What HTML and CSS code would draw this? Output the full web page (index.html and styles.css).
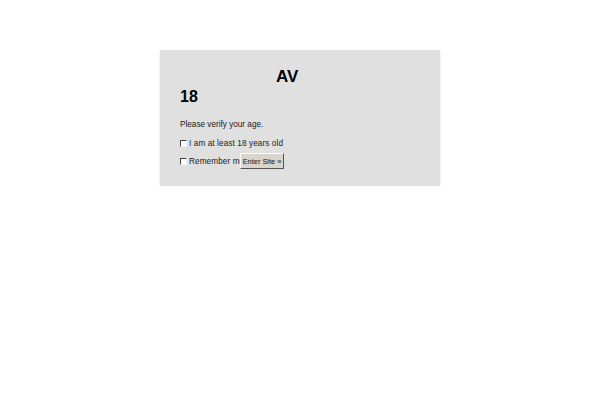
FILE: index.html
```html
<!DOCTYPE html>
<html>
<head>
<meta charset="utf-8">
<link rel="stylesheet" href="styles.css">
</head>
<body>
<div class="box">
  <div class="logo">AV</div>
  <div class="age">18</div>
  <p class="msg">Please verify your age.</p>
  <div class="row"><span class="cb"></span><span class="lbl">I am at least 18 years old</span></div>
  <div class="row row2"><span class="cb"></span><span class="lbl clip">Remember me</span><button class="btn">Enter Site »</button></div>
</div>
</body>
</html>
```
FILE: styles.css
```css
html, body { margin: 0; padding: 0; background: #fff; }
body { font-family: "Liberation Sans", Arial, sans-serif; }
.box {
  margin: 50px 0 0 160px;
  width: 240px;
  height: 116px;
  padding: 10px 20px;
  background: #e0e0e0;
  box-shadow: 0 1px 2px rgba(0,0,0,0.12);
}
.logo { font-weight: bold; font-size: 17px; line-height: 20px; padding-left: 96px; margin-top: 7px; }
.age { font-weight: bold; font-size: 16px; line-height: 20px; margin-top: 0; }
.msg { font-size: 8.2px; margin: 13px 0 0; line-height: 10px; color: #1a1a1a; }
.row { display: flex; align-items: center; font-size: 8.2px; color: #1a1a1a; margin-top: 8px; height: 10px; letter-spacing: 0.1px; }
.row2 { margin-top: 5px; height: 16px; }
.cb { width: 5px; height: 5px; border-top: 1px solid #444; border-left: 1px solid #444; border-right: 1px solid #f4f4f4; border-bottom: 1px solid #f4f4f4; background: #fff; margin-right: 2px; }
.clip { width: 51px; overflow: hidden; white-space: nowrap; }
.btn {
  font-family: "Liberation Sans", Arial, sans-serif; font-size: 7.4px; padding: 0; height: 16px; width: 44px; white-space: nowrap; letter-spacing: 0;
  background: #d9d5cc; border: 1px solid; border-color: #fff #555 #555 #fff; color: #111; margin: 0;
}
```
